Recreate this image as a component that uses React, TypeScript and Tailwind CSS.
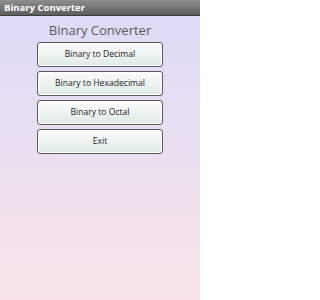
const buttons = ["Binary to Decimal", "Binary to Hexadecimal", "Binary to Octal", "Exit"];

export default function App() {
  return (
    <div className="w-[200px] h-[300px] flex flex-col bg-gradient-to-b from-[#dcdaf8] to-[#f9e5e9] font-['Open_Sans',sans-serif]">
      {/* Title bar */}
      <div className="h-[16px] bg-gradient-to-b from-[#8e8e8e] to-[#5e5e5e] border-b border-[#3c3c3c] flex items-center pl-[4px]">
        <span className="text-[9.5px] font-bold text-white leading-none">Binary Converter</span>
      </div>

      <h1 className="mt-[5px] text-center text-[13px] leading-[18px] text-[#5a5a5a]">Binary Converter</h1>

      <div className="mt-[3px] flex flex-col items-center gap-[4px]">
        {buttons.map((label) => (
          <button
            key={label}
            className="w-[126px] h-[25px] rounded-[3px] border border-[#5a5a5a] bg-gradient-to-b from-[#fbfcfc] to-[#dfeae6] text-[8.6px] text-[#1e1e1e] shadow-[inset_0_0_0_1px_#ffffff]"
          >
            {label}
          </button>
        ))}
      </div>
    </div>
  );
}
